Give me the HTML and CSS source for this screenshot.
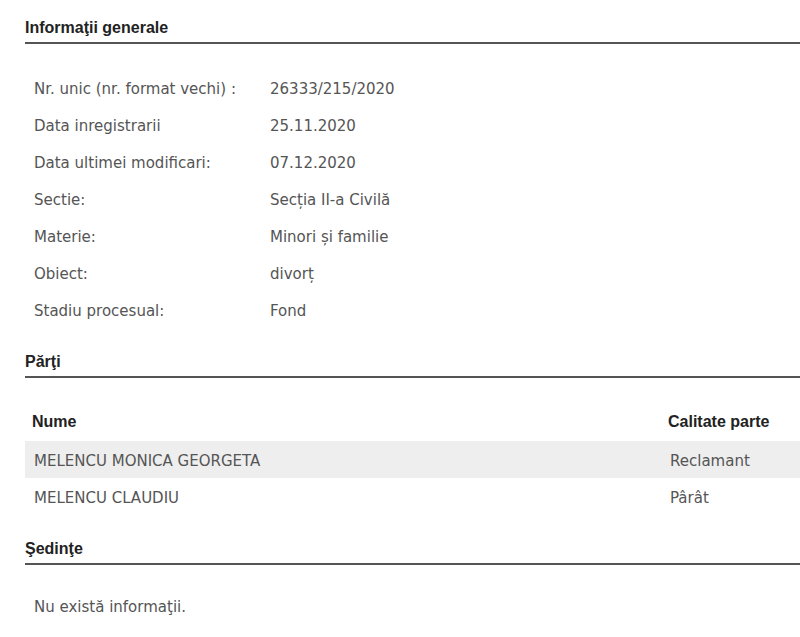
FILE: index.html
```html
<!DOCTYPE html>
<html lang="ro">
<head>
    <meta charset="UTF-8">
    <title>Informaţii dosar</title>
    <link rel="stylesheet" href="styles.css">
</head>
<body>
<div class="page">

    <h3 class="section-title">Informaţii generale</h3>
    <table class="info-table">
        <tr><td class="label">Nr. unic (nr. format vechi) :</td><td>26333/215/2020</td></tr>
        <tr><td class="label">Data inregistrarii</td><td>25.11.2020</td></tr>
        <tr><td class="label">Data ultimei modificari:</td><td>07.12.2020</td></tr>
        <tr><td class="label">Sectie:</td><td>Secția II-a Civilă</td></tr>
        <tr><td class="label">Materie:</td><td>Minori și familie</td></tr>
        <tr><td class="label">Obiect:</td><td>divorț</td></tr>
        <tr><td class="label">Stadiu procesual:</td><td>Fond</td></tr>
    </table>

    <h3 class="section-title">Părţi</h3>
    <table class="parti-table">
        <thead>
            <tr><th>Nume</th><th class="calitate">Calitate parte</th></tr>
        </thead>
        <tbody>
            <tr class="odd"><td>MELENCU MONICA GEORGETA</td><td class="calitate">Reclamant</td></tr>
            <tr><td>MELENCU CLAUDIU</td><td class="calitate">Pârât</td></tr>
        </tbody>
    </table>

    <h3 class="section-title">Şedinţe</h3>
    <p class="empty">Nu există informaţii.</p>

</div>
</body>
</html>
```

FILE: styles.css
```css
body {
    margin: 0;
    padding: 0;
    background: #fff;
    overflow: hidden;
    font-family: "DejaVu Sans", Tahoma, sans-serif;
    color: #555;
}

.page {
    width: 775px;
    padding: 19px 0 0 25px;
}

.section-title {
    font-family: "Liberation Sans", Arial, sans-serif;
    font-size: 16px;
    line-height: 18px;
    font-weight: bold;
    color: #222;
    margin: 0;
    padding-bottom: 5px;
    border-bottom: 2px solid #555;
}

.info-table {
    border-collapse: collapse;
    margin: 26px 0 24px 0;
    font-size: 15px;
}

.info-table td {
    height: 37px;
    padding: 0 0 0 9px;
    vertical-align: middle;
}

.info-table td.label {
    width: 227px;
}

.parti-table {
    border-collapse: collapse;
    width: 775px;
    margin: 24px 0 25px 0;
    font-size: 15px;
}

.parti-table th {
    font-family: "Liberation Sans", Arial, sans-serif;
    font-size: 16px;
    color: #222;
    text-align: left;
    height: 39px;
    padding: 0 0 0 7px;
}

.parti-table td {
    height: 34px;
    padding: 3px 0 0 9px;
}

.parti-table th.calitate {
    width: 132px;
    padding-left: 0;
}

.parti-table td.calitate {
    padding-left: 2px;
}

.parti-table tr.odd td {
    background: #eee;
}

.empty {
    font-size: 15px;
    line-height: 18px;
    margin: 33px 0 0 9px;
}
```
